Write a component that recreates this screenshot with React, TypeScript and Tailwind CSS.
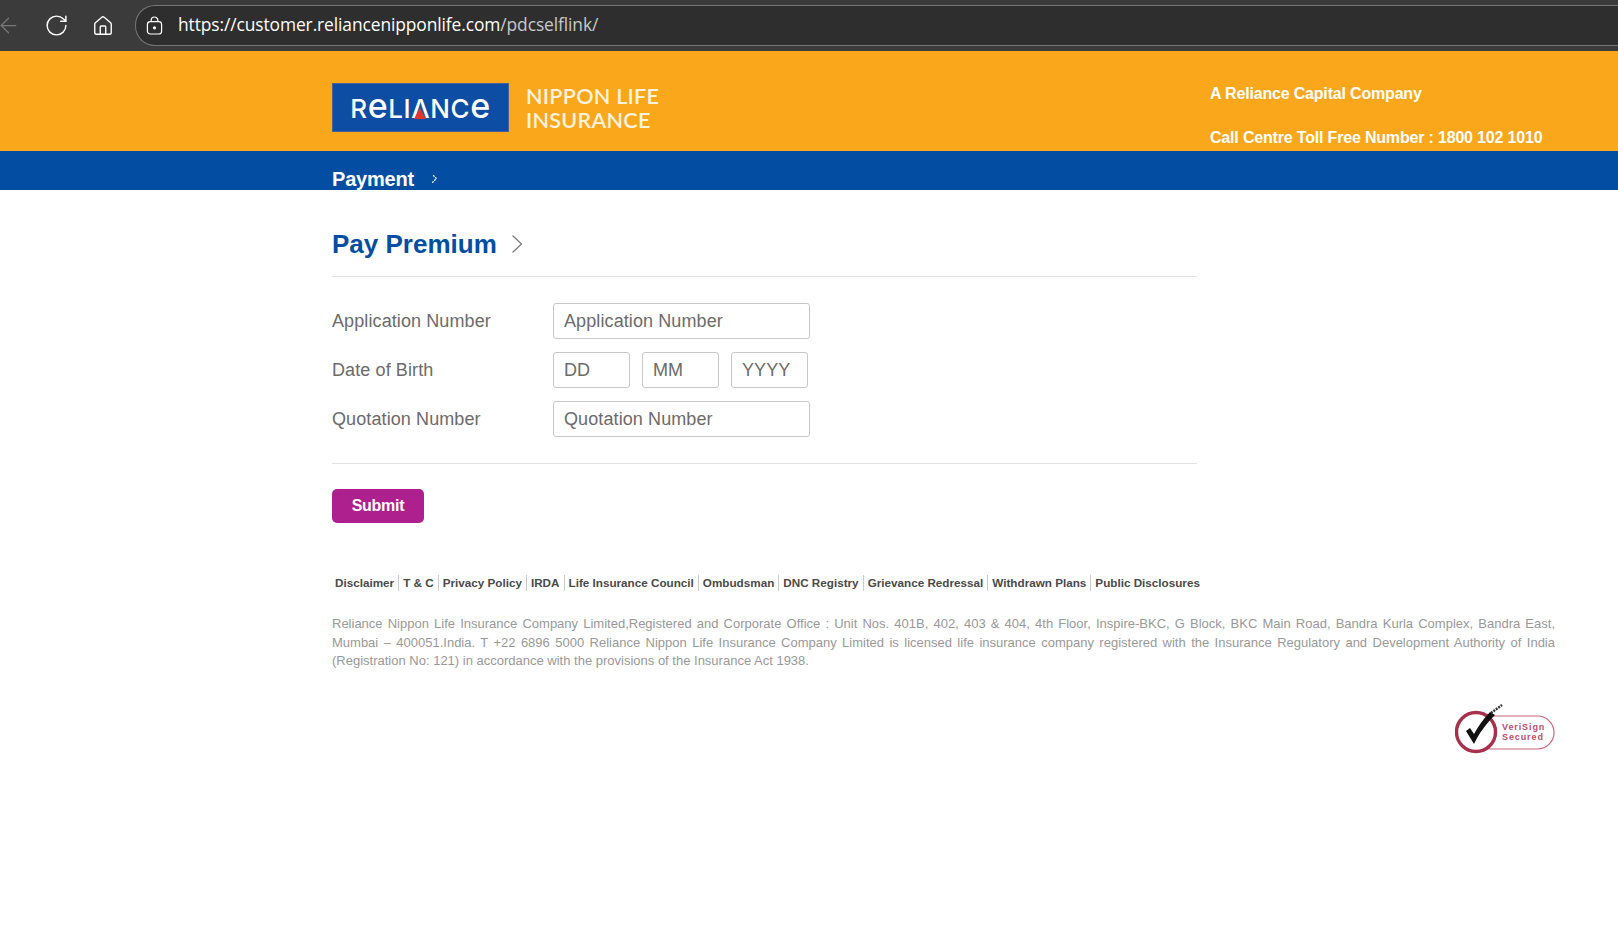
import { ChevronRight, RotateCw, Home, ArrowLeft } from 'lucide-react'

const footerLinks = [
  'Disclaimer',
  'T & C',
  'Privacy Policy',
  'IRDA',
  'Life Insurance Council',
  'Ombudsman',
  'DNC Registry',
  'Grievance Redressal',
  'Withdrawn Plans',
  'Public Disclosures',
]

function BrowserBar() {
  return (
    <div className="flex h-[51px] items-center bg-[#3b3b3b]">
      <ArrowLeft className="ml-[-4px] h-[25px] w-[25px] text-[#777777]" strokeWidth={1.2} />
      <RotateCw className="ml-[23px] h-[25px] w-[25px] text-white" strokeWidth={1.4} />
      <Home className="ml-[23px] h-[22px] w-[22px] text-white" strokeWidth={1.5} />
      <div className="ml-[21px] flex h-[41px] flex-1 items-center rounded-l-[20px] border border-r-0 border-[#777777] bg-[#2e2e2e] pl-[10px]">
        <svg width="17" height="19" viewBox="0 0 18 20" fill="none" stroke="white" strokeWidth="1.3">
          <rect x="1.5" y="6" width="15" height="13" rx="3" />
          <path d="M5.5 6V4.5a3.5 3.5 0 0 1 7 0V6" />
          <circle cx="9" cy="12.5" r="1" fill="white" />
        </svg>
        <span className="ml-[15px] pb-[2px] font-['Open_Sans',sans-serif] text-[17.4px] tracking-[-0.1px] text-white">
          https://customer.reliancenipponlife.com<span className="text-[#c8c8c8]">/pdcselflink/</span>
        </span>
      </div>
    </div>
  )
}

function Logo() {
  return (
    <div className="flex items-center">
      <div className="flex h-[49px] w-[177px] items-center justify-center border border-[#4a5f9e] bg-[#0E4DA4] pb-[3px] font-['Inter',sans-serif] text-[26px] leading-none font-medium tracking-[0.6px] text-white">
        <span className="relative flex items-baseline">
          R<span className="text-[34px]">e</span>LI
          <span className="relative">
            Λ
            <span className="absolute bottom-[3px] left-[3px] h-0 w-0 border-x-[6px] border-b-[11px] border-x-transparent border-b-[#E0362C]" />
          </span>
          NC<span className="text-[34px]">e</span>
        </span>
      </div>
      <div className="ml-[17px] font-['Lato',sans-serif] text-[21.5px] leading-[24px] font-semibold tracking-[0.3px] text-[#fff3df]">
        <div>NIPPON LIFE</div>
        <div>INSURANCE</div>
      </div>
    </div>
  )
}

function Header() {
  return (
    <>
      <div className="flex h-[100px] bg-[#FBA71B] pl-[332px]">
        <div className="mt-[32px] w-[878px]">
          <Logo />
        </div>
        <div className="pt-[33px] text-[16px] font-bold tracking-[-0.18px] text-white">
          <div className="leading-[20px]">A Reliance Capital Company</div>
          <div className="mt-[24px] leading-[20px]">Call Centre Toll Free Number : 1800 102 1010</div>
        </div>
      </div>
      <div className="flex h-[39px] items-start overflow-hidden bg-[#034EA2] pl-[332px]">
        <span className="mt-[15px] text-[20px] leading-[26px] font-bold tracking-[-0.2px] text-white">Payment</span>
        <ChevronRight className="mt-[20px] ml-[13px] h-[15px] w-[15px] text-white" strokeWidth={2} strokeDasharray="1.5 3" />
      </div>
    </>
  )
}

function Field({ label, children }: { label: string; children: React.ReactNode }) {
  return (
    <div className="flex h-[36px] items-center">
      <label className="w-[221px] pt-[1px] text-[18px] tracking-[0.1px] text-[#6b6b6b]">{label}</label>
      {children}
    </div>
  )
}

function TextBox({ placeholder, width }: { placeholder: string; width: string }) {
  return (
    <input
      placeholder={placeholder}
      className={`h-[36px] rounded-[3px] border border-[#c8c8c8] px-[10px] text-[18px] tracking-[0.1px] text-[#6b6b6b] placeholder:text-[#6b6b6b] ${width}`}
    />
  )
}

export default function App() {
  return (
    <div className="min-h-[927px] bg-white font-['Liberation_Sans',Arial,sans-serif]">
      <BrowserBar />
      <Header />
      <main className="pl-[332px] pr-[63px]">
        <div className="w-[865px]">
          <div className="flex h-[87px] items-center border-b border-[#e2e2e2] pt-[42px] pb-[21px]">
            <h1 className="text-[26px] leading-none font-bold text-[#034EA2]">Pay Premium</h1>
            <svg className="ml-[14px]" width="12" height="20" viewBox="0 0 12 20" fill="none" stroke="#777777" strokeWidth="1.2">
              <path d="M1.5 1.5 L10.5 10 L1.5 18.5" />
            </svg>
          </div>
          <div className="flex flex-col gap-[13px] border-b border-[#e2e2e2] pt-[26px] pb-[26px]">
            <Field label="Application Number">
              <TextBox placeholder="Application Number" width="w-[257px]" />
            </Field>
            <Field label="Date of Birth">
              <div className="flex gap-[12px]">
                <TextBox placeholder="DD" width="w-[77px]" />
                <TextBox placeholder="MM" width="w-[77px]" />
                <TextBox placeholder="YYYY" width="w-[77px]" />
              </div>
            </Field>
            <Field label="Quotation Number">
              <TextBox placeholder="Quotation Number" width="w-[257px]" />
            </Field>
          </div>
          <button className="mt-[25px] h-[34px] w-[92px] rounded-[5px] bg-[#AE208D] text-[16px] font-bold tracking-[-0.25px] text-white">
            Submit
          </button>
        </div>

        <ul className="mt-[52px] ml-[3px] flex items-center text-[11.7px] leading-[16px] font-bold text-[#4a4a4a]">
          {footerLinks.map((link, i) => (
            <li
              key={link}
              className={i === 0 ? 'pr-[4px]' : 'border-l border-[#cccccc] px-[4px]'}
            >
              {link}
            </li>
          ))}
        </ul>

        <p className="mt-[24px] text-justify text-[13px] leading-[18.6px] text-[#999999]">
          Reliance Nippon Life Insurance Company Limited,Registered and Corporate Office : Unit Nos. 401B, 402, 403 &amp; 404, 4th Floor, Inspire-BKC, G Block, BKC Main Road, Bandra Kurla Complex, Bandra East, Mumbai – 400051.India. T +22 6896 5000 Reliance Nippon Life Insurance Company Limited is licensed life insurance company registered with the Insurance Regulatory and Development Authority of India (Registration No: 121) in accordance with the provisions of the Insurance Act 1938.
        </p>

        <div className="mt-[33px] flex justify-end">
          <svg width="100" height="50" viewBox="0 0 100 50">
            <rect x="20" y="12" width="79" height="33" rx="16.5" fill="white" stroke="#c9667c" strokeWidth="1.2" />
            <circle cx="21" cy="28" r="19.5" fill="white" stroke="#a8304a" strokeWidth="3.4" />
            <path d="M11 27 L19 40 C24 29 32 19 40 11 L35 8 C28 15 23 23 19 30 L15 24 Z" fill="#111111" />
            <path d="M36 9 L47 1" stroke="#333333" strokeWidth="2.4" strokeDasharray="2 1" />
            <text x="47" y="26" fontSize="9" fontWeight="700" letterSpacing="0.9" fill="#b8506a">VeriSign</text>
            <text x="47" y="36" fontSize="9" fontWeight="700" letterSpacing="0.9" fill="#b8506a">Secured</text>
          </svg>
        </div>
      </main>
    </div>
  )
}
